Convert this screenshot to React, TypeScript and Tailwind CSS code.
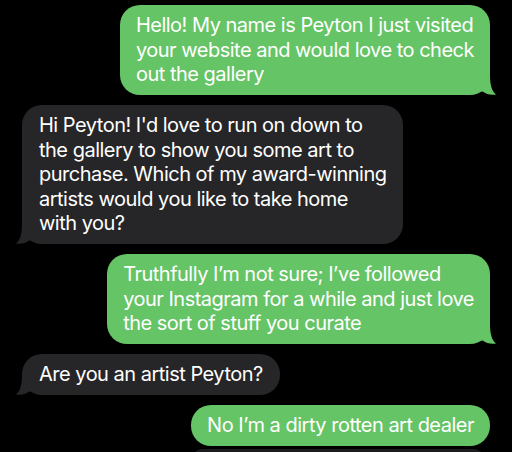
import React from 'react';

const GREEN = 'bg-[#65c466]';
const GRAY = 'bg-[#262628]';

function Tail({ side }: { side: 'left' | 'right' }) {
  if (side === 'right') {
    return (
      <svg className="absolute bottom-0 right-[-6px]" width="20" height="20" viewBox="0 0 20 20">
        <path d="M0 0 L14 0 C14 9 15.5 16 20 19.5 C15 20.5 10 19 6.5 16.5 L0 16.5 Z" fill="#65c466" />
      </svg>
    );
  }
  return (
    <svg className="absolute bottom-0 left-[-6px]" width="20" height="20" viewBox="0 0 20 20">
      <path d="M20 0 L6 0 C6 9 4.5 16 0 19.5 C5 20.5 10 19 13.5 16.5 L20 16.5 Z" fill="#262628" />
    </svg>
  );
}

function Sent({ lines, tail = true }: { lines: string[]; tail?: boolean }) {
  return (
    <div className="flex justify-end pr-[22px]">
      <div className={`relative w-fit rounded-[20px] ${GREEN} px-[16px] py-[8px] text-white`}>
        {lines.map((l, i) => (
          <div key={i} className="relative whitespace-nowrap">{l}</div>
        ))}
        {tail && <Tail side="right" />}
      </div>
    </div>
  );
}

function Received({ lines }: { lines: string[] }) {
  return (
    <div className="flex justify-start pl-[22px]">
      <div className={`relative w-fit rounded-[20px] ${GRAY} px-[17px] py-[8px] text-white`}>
        {lines.map((l, i) => (
          <div key={i} className="relative whitespace-nowrap">{l}</div>
        ))}
        <Tail side="left" />
      </div>
    </div>
  );
}

export default function App() {
  return (
    <div
      className="w-[512px] h-[452px] overflow-hidden bg-black pt-[5px] flex flex-col gap-[10.5px] text-[20px] leading-[24.5px] tracking-[-0.5px]"
      style={{ fontFamily: 'Inter, "Liberation Sans", sans-serif' }}
    >
      <Sent
        lines={[
          'Hello! My name is Peyton I just visited',
          'your website and would love to check',
          'out the gallery',
        ]}
      />
      <Received
        lines={[
          "Hi Peyton! I'd love to run on down to",
          'the gallery to show you some art to',
          'purchase. Which of my award-winning',
          'artists would you like to take home',
          'with you?',
        ]}
      />
      <Sent
        lines={[
          'Truthfully I’m not sure; I’ve followed',
          'your Instagram for a while and just love',
          'the sort of stuff you curate',
        ]}
      />
      <Received lines={['Are you an artist Peyton?']} />
      <div className="flex flex-col gap-[3px]">
        <Sent lines={['No I’m a dirty rotten art dealer']} tail={false} />
        <div className="flex justify-end pr-[28px]">
          <div className="h-[10px] w-[292px] rounded-t-[20px] bg-[#1c1c1e]" />
        </div>
      </div>
    </div>
  );
}
